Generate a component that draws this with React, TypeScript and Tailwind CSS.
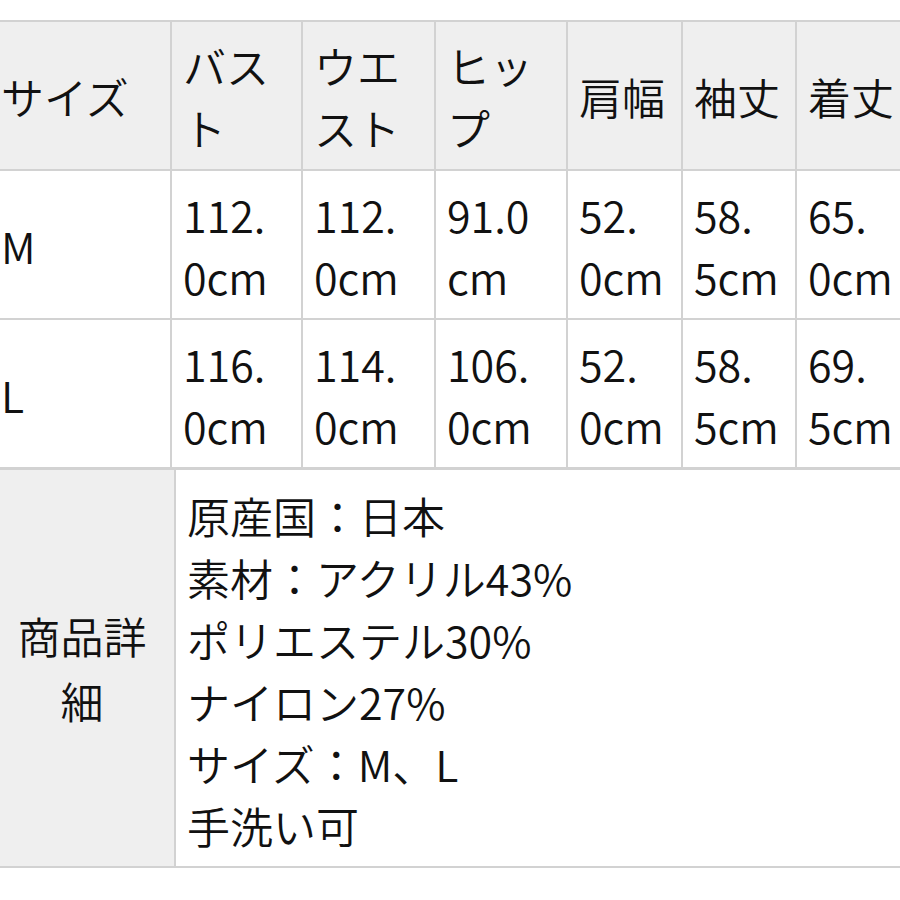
import React from "react";

const font = {
  fontFamily: '"Noto Sans CJK JP", "Noto Sans", sans-serif',
};

const cols = "grid-cols-[182px_131px_133px_132px_115px_114px_115px]";

type Cell = string[];

const header: Cell[] = [
  ["サイズ"],
  ["バス", "ト"],
  ["ウエ", "スト"],
  ["ヒッ", "プ"],
  ["肩幅"],
  ["袖丈"],
  ["着丈"],
];

const rows: Cell[][] = [
  [["M"], ["112.", "0cm"], ["112.", "0cm"], ["91.0", "cm"], ["52.", "0cm"], ["58.", "5cm"], ["65.", "0cm"]],
  [["L"], ["116.", "0cm"], ["114.", "0cm"], ["106.", "0cm"], ["52.", "0cm"], ["58.", "5cm"], ["69.", "5cm"]],
];

function CellBox({ lines, gray }: { lines: string[]; gray?: boolean }) {
  return (
    <div
      className={`h-[149px] border-r-2 border-b-2 border-[#d2d2d2] pl-[11px] flex flex-col justify-center ${
        gray ? "bg-[#efefef]" : "bg-white"
      }`}
    >
      {lines.map((l, i) => (
        <div key={i} className="whitespace-nowrap leading-[62px]">
          {l}
        </div>
      ))}
    </div>
  );
}

export default function App() {
  const details = [
    "原産国：日本",
    "素材：アクリル43%",
    "ポリエステル30%",
    "ナイロン27%",
    "サイズ：M、L",
    "手洗い可",
  ];
  return (
    <div
      className="w-[900px] h-[900px] overflow-hidden bg-white text-[#111] text-[43px] font-[350]"
      style={font}
    >
      <div className="pt-5 ml-[-12px] w-[924px]">
        <div className={`grid ${cols} border-t-2 border-l-2 border-[#d2d2d2]`}>
          {header.map((c, i) => (
            <CellBox key={`h${i}`} lines={c} gray />
          ))}
          {rows.map((r, ri) =>
            r.map((c, ci) => <CellBox key={`r${ri}-${ci}`} lines={c} />)
          )}
        </div>
        <div className="grid grid-cols-[186px_738px] border-l-2 border-t border-[#d2d2d2]">
          <div className="bg-[#efefef] border-r-2 border-b-2 border-[#d2d2d2] flex items-center justify-center text-center leading-[65px]">
            <div>
              商品詳
              <br />細
            </div>
          </div>
          <div className="bg-white border-r-2 border-b-2 border-[#d2d2d2] pl-[11px] pt-[14px] pb-[10px]">
            {details.map((d, i) => (
              <div key={i} className="leading-[62px] whitespace-nowrap">
                {d}
              </div>
            ))}
          </div>
        </div>
      </div>
    </div>
  );
}
